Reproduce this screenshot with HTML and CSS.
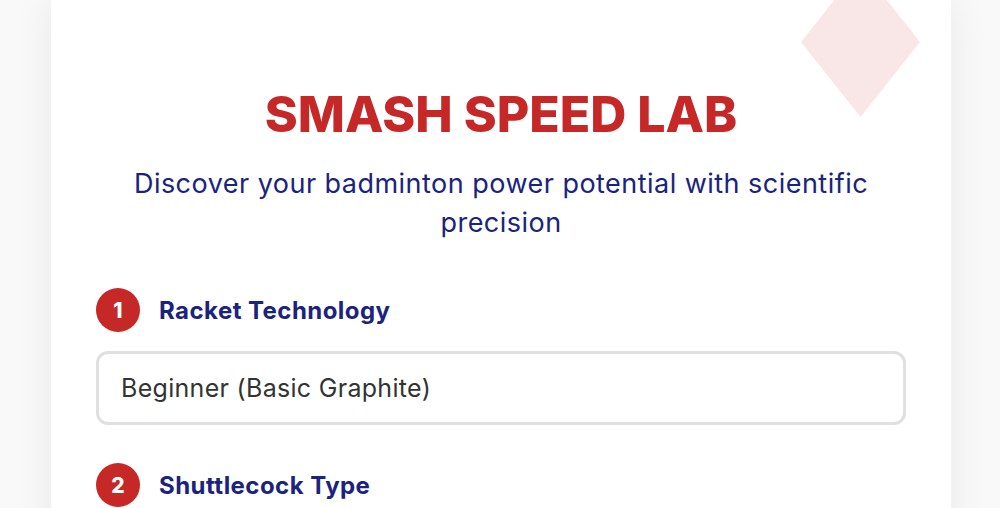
FILE: index.html
```html
<!DOCTYPE html>
<html lang="en">
<head>
<meta charset="utf-8">
<title>Smash Speed Lab</title>
<link rel="stylesheet" href="styles.css">
</head>
<body>
<div class="page">
  <main class="card">
    <div class="deco" aria-hidden="true"></div>
    <header class="hero">
      <h1 class="title">SMASH SPEED LAB</h1>
      <p class="subtitle">Discover your badminton power potential with scientific precision</p>
    </header>
    <form class="steps">
      <div class="step">
        <label class="step-label" for="racket"><span class="badge">1</span><span class="step-name">Racket Technology</span></label>
        <select id="racket" class="field">
          <option>Beginner (Basic Graphite)</option>
        </select>
      </div>
      <div class="step">
        <label class="step-label" for="shuttle"><span class="badge">2</span><span class="step-name">Shuttlecock Type</span></label>
        <select id="shuttle" class="field">
          <option>Nylon (Training)</option>
        </select>
      </div>
    </form>
  </main>
</div>
</body>
</html>
```
FILE: styles.css
```css
html, body {
  margin: 0;
  padding: 0;
  overflow: hidden;
}
body {
  background: #f9f9f9;
  font-family: "Inter", "Open Sans", sans-serif;
}
.page {
  display: flex;
  justify-content: center;
  padding-left: 2px;
}
.card {
  position: relative;
  overflow: hidden;
  width: 900px;
  box-sizing: border-box;
  background: #ffffff;
  padding: 84px 45px 40px;
  box-shadow: 0 0 40px rgba(0, 0, 0, 0.07);
}
.deco {
  position: absolute;
  top: -33px;
  right: 31px;
  width: 119px;
  height: 150px;
  background: #f9e7e7;
  clip-path: polygon(50% 0, 100% 50%, 50% 100%, 0 50%);
}
.hero {
  position: relative;
  text-align: center;
}
.title {
  margin: 0;
  color: #c62828;
  font-size: 50px;
  font-weight: 800;
  line-height: 1.2;
}
.subtitle {
  margin: 20px auto 0;
  color: #1a237e;
  font-size: 27px;
  letter-spacing: 0.47px;
  line-height: 39px;
}
.steps {
  margin-top: 46px;
  display: flex;
  flex-direction: column;
  gap: 38px;
}
.step {
  display: flex;
  flex-direction: column;
  gap: 19px;
}
.step-label {
  display: flex;
  align-items: center;
  gap: 19px;
}
.badge {
  flex: none;
  width: 44px;
  height: 44px;
  border-radius: 50%;
  background: #c62828;
  color: #fff;
  font-weight: 800;
  font-size: 21px;
  display: flex;
  align-items: center;
  justify-content: center;
}
.step-name {
  color: #1a237e;
  font-weight: 700;
  font-size: 24px;
  letter-spacing: 0.45px;
}
.field {
  appearance: none;
  -webkit-appearance: none;
  width: 100%;
  height: 74px;
  box-sizing: border-box;
  border: 3px solid #e0e0e0;
  border-radius: 12px;
  background: #fff;
  padding: 0 22px;
  font-family: inherit;
  font-size: 25px;
  letter-spacing: 0.3px;
  color: #333;
}
```
